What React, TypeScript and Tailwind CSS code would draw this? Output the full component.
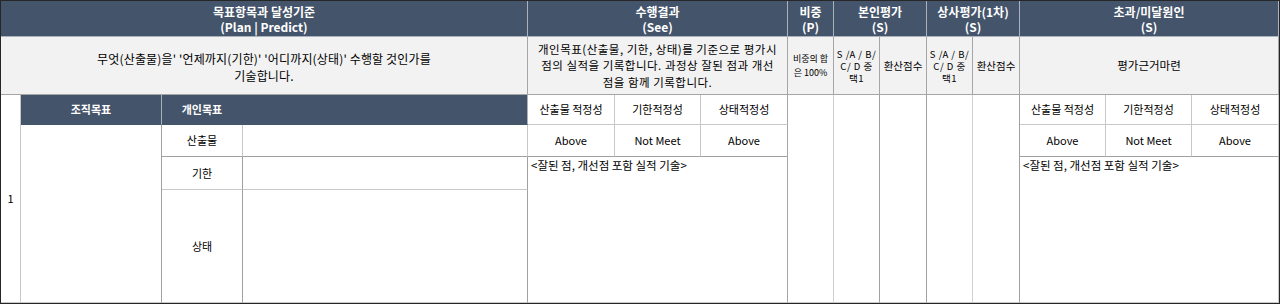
import React from "react";

const base = "flex items-center justify-center text-center border-r border-b";
const dark = `${base} bg-[#44546a] text-white font-bold border-[#aab2bd]`;
const gray = `${base} bg-[#f2f2f2] text-black border-[#a6a6a6]`;
const white = `${base} bg-white text-black border-[#c8c8c8]`;

function Pick() {
  return (
    <div className="flex flex-col items-center whitespace-nowrap text-[9.5px] leading-[12px] tracking-[0.5px]">
      <span>S /A / B/</span>
      <span>C/ D 중</span>
      <span>택1</span>
    </div>
  );
}

export default function App() {
  return (
    <div className="w-[1280px] h-[304px] border border-[#262626] bg-white font-['Noto_Sans_CJK_KR','Malgun_Gothic',sans-serif]">
      <div className="grid grid-cols-[20px_141px_81px_285px_87px_86px_87px_46px_46px_47px_46px_47px_86px_86px_87px] grid-rows-[36px_58px_30px_32px_33px_113px] w-[1278px] h-[302px]">
        {/* Row 1 */}
        <div className={`${dark} col-start-1 col-span-4 row-start-1 text-[12px] leading-[15px]`}>
          <div>
            목표항목과 달성기준
            <br />
            (Plan | Predict)
          </div>
        </div>
        <div className={`${dark} col-start-5 col-span-3 row-start-1 text-[12px] leading-[15px]`}>
          <div>
            수행결과
            <br />
            (See)
          </div>
        </div>
        <div className={`${dark} col-start-8 col-span-1 row-start-1 text-[12px] leading-[15px]`}>
          <div>
            비중
            <br />
            (P)
          </div>
        </div>
        <div className={`${dark} col-start-9 col-span-2 row-start-1 text-[12px] leading-[15px]`}>
          <div>
            본인평가
            <br />
            (S)
          </div>
        </div>
        <div className={`${dark} col-start-11 col-span-2 row-start-1 text-[12px] leading-[15px]`}>
          <div>
            상사평가(1차)
            <br />
            (S)
          </div>
        </div>
        <div className={`${dark} col-start-13 col-span-3 row-start-1 text-[12px] leading-[15px]`}>
          <div>
            초과/미달원인
            <br />
            (S)
          </div>
        </div>

        {/* Row 2 */}
        <div className={`${gray} col-start-1 col-span-4 row-start-2 text-[12px] leading-[17px] tracking-[0.15px] pt-[2px]`}>
          <div>
            무엇(산출물)을' '언제까지(기한)' '어디까지(상태)' 수행할 것인가를
            <br />
            기술합니다.
          </div>
        </div>
        <div className={`${gray} col-start-5 col-span-3 row-start-2 text-[11.5px] leading-[16.5px] tracking-[0.5px]`}>
          <div>
            개인목표(산출물, 기한, 상태)를 기준으로 평가시
            <br />
            점의 실적을 기록합니다. 과정상 잘된 점과 개선
            <br />
            점을 함께 기록합니다.
          </div>
        </div>
        <div className={`${gray} col-start-8 row-start-2 text-[9px] leading-[14px]`}>
          <div className="flex flex-col items-center whitespace-nowrap">
            <span>비중의 합</span>
            <span>은 100%</span>
          </div>
        </div>
        <div className={`${gray} col-start-9 row-start-2`}>
          <Pick />
        </div>
        <div className={`${gray} col-start-10 row-start-2 text-[10.5px] whitespace-nowrap`}>환산점수</div>
        <div className={`${gray} col-start-11 row-start-2`}>
          <Pick />
        </div>
        <div className={`${gray} col-start-12 row-start-2 text-[10.5px] whitespace-nowrap`}>환산점수</div>
        <div className={`${gray} col-start-13 col-span-3 row-start-2 text-[11.5px]`}>평가근거마련</div>

        {/* Row number */}
        <div className={`${white} col-start-1 row-start-3 row-span-4 text-[11px] border-[#a0a0a0]`}>1</div>

        {/* Row 3 headers */}
        <div className={`${dark} col-start-2 row-start-3 text-[11px] border-b-[#44546a]`}>조직목표</div>
        <div className={`${dark} col-start-3 row-start-3 text-[11px] border-r-[#44546a] border-b-[#44546a]`}>개인목표</div>
        <div className={`${dark} col-start-4 row-start-3 border-b-[#44546a]`}></div>

        <div className={`${white} col-start-5 row-start-3 text-[11px]`}>산출물 적정성</div>
        <div className={`${white} col-start-6 row-start-3 text-[11px]`}>기한적정성</div>
        <div className={`${white} col-start-7 row-start-3 text-[11px] border-r-[#a6a6a6]`}>상태적정성</div>

        <div className={`${white} col-start-8 row-start-3 row-span-4 border-r-[#d0d0d0]`}></div>
        <div className={`${white} col-start-9 row-start-3 row-span-4 border-r-[#a0a0a0]`}></div>
        <div className={`${white} col-start-10 row-start-3 row-span-4 border-r-[#a0a0a0]`}></div>
        <div className={`${white} col-start-11 row-start-3 row-span-4 border-r-[#d0d0d0]`}></div>
        <div className={`${white} col-start-12 row-start-3 row-span-4 border-r-[#a0a0a0]`}></div>

        <div className={`${white} col-start-13 row-start-3 text-[11px]`}>산출물 적정성</div>
        <div className={`${white} col-start-14 row-start-3 text-[11px]`}>기한적정성</div>
        <div className={`${white} col-start-15 row-start-3 text-[11px]`}>상태적정성</div>

        {/* 조직목표 data */}
        <div className={`${white} col-start-2 row-start-4 row-span-3 border-r-[#a0a0a0]`}></div>

        {/* Row 4 */}
        <div className={`${white} col-start-3 row-start-4 text-[11px] border-b-[#a0a0a0]`}>산출물</div>
        <div className={`${white} col-start-4 row-start-4 border-b-[#a0a0a0]`}></div>
        <div className={`${white} col-start-5 row-start-4 text-[11px] border-b-[#a0a0a0]`}>Above</div>
        <div className={`${white} col-start-6 row-start-4 text-[11px] border-b-[#a0a0a0]`}>Not Meet</div>
        <div className={`${white} col-start-7 row-start-4 text-[11px] border-b-[#a0a0a0] border-r-[#a6a6a6]`}>Above</div>
        <div className={`${white} col-start-13 row-start-4 text-[11px] border-b-[#a0a0a0]`}>Above</div>
        <div className={`${white} col-start-14 row-start-4 text-[11px] border-b-[#a0a0a0]`}>Not Meet</div>
        <div className={`${white} col-start-15 row-start-4 text-[11px] border-b-[#a0a0a0]`}>Above</div>

        {/* Row 5 */}
        <div className={`${white} col-start-3 row-start-5 text-[11px] border-r-[#a0a0a0]`}>기한</div>
        <div className={`${white} col-start-4 row-start-5 border-r-[#a0a0a0]`}></div>
        <div className="col-start-5 col-span-3 row-start-5 row-span-2 bg-white border-r border-b border-[#c8c8c8] border-r-[#a6a6a6] text-[11.5px] leading-[14px] pl-[3px] pt-[1px] text-black whitespace-nowrap">
          &lt;잘된 점, 개선점 포함 실적 기술&gt;
        </div>
        <div className="col-start-13 col-span-3 row-start-5 row-span-2 bg-white border-r border-b border-[#c8c8c8] text-[11.5px] leading-[14px] pl-[3px] pt-[1px] text-black whitespace-nowrap">
          &lt;잘된 점, 개선점 포함 실적 기술&gt;
        </div>

        {/* Row 6 */}
        <div className={`${white} col-start-3 row-start-6 text-[11px] border-r-[#a0a0a0]`}>상태</div>
        <div className={`${white} col-start-4 row-start-6 border-r-[#a0a0a0]`}></div>
      </div>
    </div>
  );
}
